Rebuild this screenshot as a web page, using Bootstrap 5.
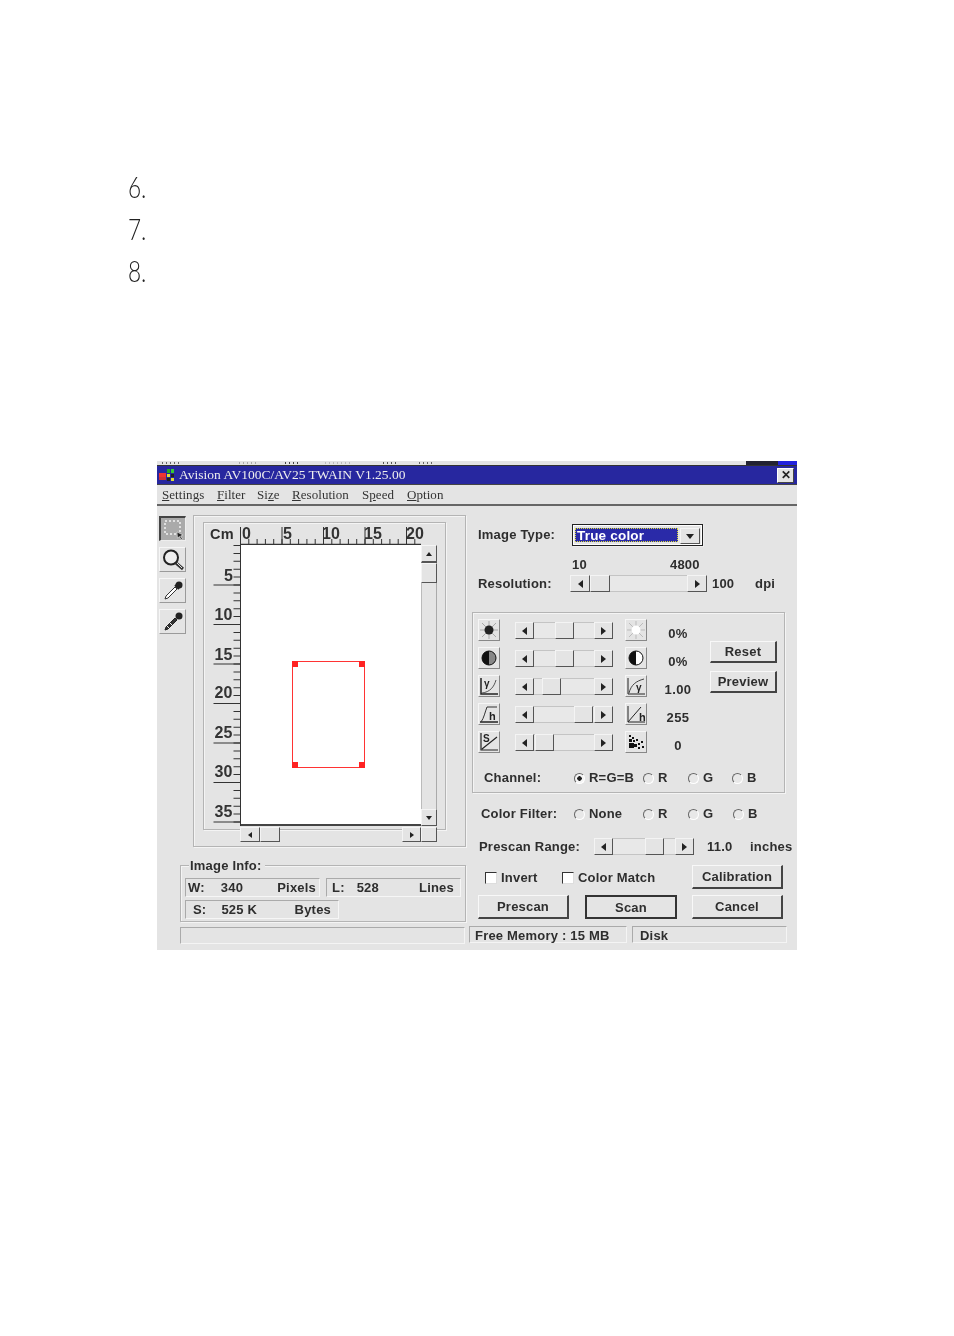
<!DOCTYPE html>
<html lang="en">
<head>
<meta charset="utf-8">
<title>Avision TWAIN</title>
<link href="https://cdn.jsdelivr.net/npm/bootstrap@5.3.0/dist/css/bootstrap.min.css" rel="stylesheet">
<style>
html,body{background:#fff;margin:0;padding:0}
body{width:954px;height:1336px;overflow:hidden;font-family:"Liberation Sans",Arial,sans-serif}
.stepsx{padding:166px 0 0 128px;height:461px}
.stepx{height:42px;line-height:42px;font-family:Lato,"Liberation Sans",sans-serif;font-weight:300;font-size:29px;color:#222;transform:scaleX(.78);transform-origin:0 50%}
.wnd{width:640px;height:489px;margin-left:157px;background:#e4e4e4;color:#2e2e2e;font-size:13px;font-weight:700;letter-spacing:.2px;line-height:14px;filter:blur(.35px);white-space:nowrap}
.slv{height:4px;overflow:hidden;position:relative}
.slvd{position:absolute;top:0;right:0;width:51px;height:4px;background:linear-gradient(90deg,#223 0 32px,#2222dd 32px)}
.ttl{height:20px;background:#27279f;color:#eee;font-family:"Liberation Serif",serif;font-weight:400;font-size:13.5px;letter-spacing:0;border-top:1px solid #333;border-bottom:1px solid #444}
.ttl svg{margin:0 3px 0 1px}
.xbtn{width:17px;height:15px;margin:0 3px 0 auto;background:#e4e4e4;border:1px solid;border-color:#fff #444 #444 #fff;color:#222;font:700 12px/12px "Liberation Sans",sans-serif;text-align:center;letter-spacing:0}
.mnu{height:21px;border-bottom:2px solid #666;font-family:"Liberation Serif",serif;font-weight:400;font-size:13px;letter-spacing:.05px;padding-left:5px;color:#333}
.mnu span{display:inline-block}
.mnu span:nth-child(1){width:55px}.mnu span:nth-child(2){width:40px}.mnu span:nth-child(3){width:35px}.mnu span:nth-child(4){width:70px}.mnu span:nth-child(5){width:45px}
.lcol{width:315px;flex:none}
.rcol{width:325px;flex:none}
.tools{width:28px;margin:10px 6px 0 2px;flex:none;gap:6px}
.tb{width:27px;height:25px;padding:0;display:flex;align-items:center;justify-content:center;background:#e4e4e4;border:1px solid;border-color:#f6f6f6 #9a9a9a #9a9a9a #f6f6f6;border-radius:0}
.tb.on{border-color:#444 #eee #eee #444;border-width:2px 1px 1px 2px;background:#aaa}
.etch{border:1px solid #b4b4b4;box-shadow:inset 1px 1px 0 #f4f4f4,1px 1px 0 #f4f4f4}
.outer{width:273px;height:332px;margin-top:9px;padding:6px 0 0 9px}
.inner{width:243px;height:308px;display:grid;grid-template-columns:36px 180px 16px;grid-template-rows:22px 281px;padding-left:1px;align-content:start}
.cmr{grid-column:1 / 4;display:flex}
.cmc{width:35px;padding:4px 0 0 5px;font-size:14.5px}
.rlr{display:block;overflow:visible}
.rlr text{font:700 16px "Liberation Sans",sans-serif;fill:#333;letter-spacing:.2px}
.cnv{background:#fff;position:relative;border-bottom:2px solid #444}
.rbox{position:absolute;left:51px;top:116px;width:73px;height:107px;border:1px solid #f33}
.rh{position:absolute;width:6px;height:6px;background:#f22}
.vsb{width:16px;height:281px}
.arw{width:0;height:0;border-style:solid;display:block}
.up{border-width:0 3px 4px 3px;border-color:transparent transparent #222}
.dn{border-width:4px 3px 0 3px;border-color:#222 transparent transparent}
.lf{border-width:4px 5px 4px 0;border-color:transparent #222 transparent transparent}
.rt{border-width:4px 0 4px 5px;border-color:transparent transparent transparent #222}
.hsb .lf{border-width:3px 4px 3px 0}.hsb .rt{border-width:3px 0 3px 4px}
.cmbb .dn{border-width:5px 4px 0 4px}
.sbb{background:#e4e4e4;border:1px solid;border-color:#f4f4f4 #555 #555 #f4f4f4;flex:none;display:flex;align-items:center;justify-content:center;border-radius:0;padding:0}
.vsb .b1{height:18px;border-bottom-width:2px}.vsb .t1{height:20px}.vsb .b2{height:17px}
.vtk{flex:1;background:#e4e4e4;border-right:1px solid #aaa;border-left:1px solid #bbb}
.hsb{grid-column:2 / 4;height:15px;margin:1px 0 0 -1px;width:197px}
.hsb .sbb{height:15px}
.sw20{width:20px}.sw19{width:19px}.sw16{width:16px}
.sbx{height:17px;width:100%}
.sbx .sbb{width:20px;height:17px}
.trk{flex:1;background:#e8e8e8;border-top:1px solid #c4c4c4;border-bottom:1px solid #c4c4c4;min-width:0;display:flex}
.trk .sbb{margin-top:-1px;margin-bottom:-1px;height:17px;width:20px}
.grp{width:286px;height:57px;margin:18px 0 0 23px;padding:12px 0 0 4px;position:relative}
.lgd{position:absolute;left:8px;top:-7px;background:#e4e4e4;padding:0 3px 0 1px;letter-spacing:.2px}
.cel{height:19px;border:1px solid;border-color:#aaa #f6f6f6 #f6f6f6 #aaa;display:flex;align-items:center;justify-content:space-between;letter-spacing:.2px;padding:0 3px 0 2px}
.cw1{width:135px}.cw2{width:135px;margin-left:6px;padding-left:5px;padding-right:6px}.cw3{width:154px;margin-top:3px;padding-left:7px;padding-right:7px}
.cel span:nth-child(2){margin-right:auto}
.cw1 span:nth-child(2){margin-left:16px}.cw2 span:nth-child(2){margin-left:12px}.cw3 span:nth-child(2){margin-left:15px}
.sbar{height:17px;margin:4px 0 0 23px}
.stc{height:17px;border:1px solid;border-color:#aaa #f4f4f4 #f4f4f4 #aaa;padding-left:5px;line-height:17px}
.s1{width:285px;margin-top:1px}.s2{width:158px;margin-left:4px;padding-left:5px}.s3{width:155px;margin-left:5px;padding-left:7px}
.r1{margin-top:18px;height:22px}
.lb1{width:100px;padding-left:6px}
.cmb{width:131px;height:22px;border:1px solid #222;box-shadow:inset 0 0 0 1px #fff,1px 1px 0 #eee;padding:3px 2px}
.cmbv{flex:1;background:#2a2aa8;color:#fff;line-height:15px;padding-left:2px;outline:1px dotted #dd3;outline-offset:-1px;font-size:13.5px}
.cmbb{width:20px;height:16px;margin-left:2px}
.r2{margin-top:12px;height:13px;padding-left:100px}.r2 span{width:98px}
.r3{margin-top:4px;height:17px}
.lb2{width:98px;padding-left:6px}
.sw1{width:137px;flex:none}
.v1{width:43px;margin-left:5px}
.pnl{width:313px;height:181px;margin-top:20px;padding:6px 0 0 5px}
.rws{width:232px;gap:6px}
.rwl{height:22px}
.ico{width:22px;height:22px;padding:0;flex:none;display:flex;align-items:center;justify-content:center;background:#e4e4e4;border:1px solid;border-color:#f6f6f6 #888 #888 #f6f6f6;border-radius:0}
.ssl{width:98px;margin:3px 12px 0 15px;flex:none;height:17px}
.ssl .sbb{width:19px}
.val{width:62px;text-align:center;padding-top:8px;letter-spacing:.4px}
.bts{margin-top:22px;gap:8px}
.wb{background:#e4e4e4;color:#2e2e2e;border:1px solid;border-color:#f8f8f8 #444 #444 #f8f8f8;border-bottom-width:2px;border-right-width:2px;border-radius:0;padding:0;font-size:13px;font-weight:700;letter-spacing:.2px;line-height:1;display:flex;align-items:center;justify-content:center}
.wb:hover{background:#e4e4e4;color:#2e2e2e;border-color:#f8f8f8 #444 #444 #f8f8f8}
.wb1{width:67px;height:22px}
.opt{height:14px}
.chn{margin-top:18px}
.o1{width:101px;padding-left:11px;margin-left:-5px}
.rdw{gap:4px;flex:none}
.w69{width:69px}.w45{width:45px}.w44{width:44px}
.wrd.form-check-input{width:11px;height:11px;margin:0;flex:none;border-radius:50%;border:1px solid;border-color:#666 #fff #fff #666;background:#e8e8e8;box-shadow:none}
.wrd.form-check-input:checked{background:radial-gradient(circle,#222 0 2px,#f4f4f4 2.5px)}
.wck.form-check-input{width:12px;height:12px;margin:0;flex:none;border-radius:0;border:1px solid;border-color:#333 #ddd #ddd #333;background:#fff;box-shadow:none}
.r4{height:14px;margin-top:14px}
.o2{width:102px;padding-left:9px}
.r5{height:17px;margin-top:17px}
.o3{width:122px;padding-left:7px}
.sw2{width:100px;flex:none}
.sw2 .sbb{width:19px}
.v2{margin-left:13px;width:43px}
.r6{height:24px;margin-top:10px}
.c1{width:90px;padding-left:13px;padding-top:2px}.c2{width:130px;padding-top:2px}
.wb2{width:91px;height:24px}
.r7{height:24px;margin-top:6px;padding-left:6px}
.wbd{border:2px solid #333;margin:0 15px 0 16px;width:92px}
.wbd:hover{border:2px solid #333}
svg{display:block}
</style>
</head>
<body>
<div class="stepsx">
  <div class="stepx">6.</div>
  <div class="stepx">7.</div>
  <div class="stepx">8.</div>
</div>
<div class="wnd">
  <div class="slv">
    <svg width="640" height="4" viewBox="0 0 640 4"><g fill="none" stroke-width="2" stroke-dasharray="1 3"><path d="M5 2h18" stroke="#666"/><path d="M82 2h18" stroke="#aaa"/><path d="M128 2h14" stroke="#444"/><path d="M168 2h26" stroke="#bbb"/><path d="M226 2h14" stroke="#555"/><path d="M262 2h14" stroke="#666"/></g></svg>
    <div class="slvd"></div>
  </div>
  <div class="ttl d-flex align-items-center">
    <svg width="18" height="15" viewBox="0 0 18 15"><rect width="18" height="15" fill="#27279f"/><rect x="1" y="5" width="7" height="4" fill="#e33"/><rect x="1" y="9" width="7" height="3" fill="#c33"/><rect x="9" y="1" width="3" height="4" fill="#2a2"/><rect x="13" y="1" width="3" height="4" fill="#3c3"/><rect x="9" y="6" width="3" height="3" fill="#dd3"/><rect x="13" y="6" width="3" height="3" fill="#222"/><rect x="9" y="10" width="3" height="3" fill="#222"/><rect x="13" y="10" width="3" height="3" fill="#dd3"/></svg>
    <span>Avision AV100C/AV25 TWAIN V1.25.00</span>
    <div class="xbtn">✕</div>
  </div>
  <div class="mnu d-flex align-items-center">
    <span><u>S</u>ettings</span><span><u>F</u>ilter</span><span>Si<u>z</u>e</span><span><u>R</u>esolution</span><span>S<u>p</u>eed</span><span><u>O</u>ption</span>
  </div>
  <div class="d-flex">
    <div class="lcol">
      <div class="d-flex">
        <div class="tools d-flex flex-column">
          <button class="tb on" type="button" aria-label="Select"><svg width="23" height="21" viewBox="0 0 23 21"><rect x="3" y="2" width="15" height="13" fill="none" stroke="#f2f2f2" stroke-width="1.500" stroke-dasharray="2 2"/><path d="M15 13l6 3-2.500 1 2 3-1.500.5-1.500-3-2 1.500z" fill="#222" stroke="#fff" stroke-width=".5"/></svg></button>
          <button class="tb" type="button" aria-label="Zoom"><svg width="24" height="23" viewBox="0 0 24 23"><circle cx="10" cy="9.500" r="7" fill="#eee" stroke="#222" stroke-width="2"/><path d="M15 15l7 6" stroke="#333" stroke-width="3"/><path d="M16 15l5 5" stroke="#ddd" stroke-width="1"/></svg></button>
          <button class="tb" type="button" aria-label="Pick"><svg width="22" height="22" viewBox="0 0 22 22"><path d="M13 5l4 4" stroke="#222" stroke-width="2"/><circle cx="17" cy="5" r="3.500" fill="#222"/><path d="M13 7L4 16l-1 3 3-1 9-9z" fill="#fff" stroke="#333"/></svg></button>
          <button class="tb" type="button" aria-label="Pick dark"><svg width="22" height="22" viewBox="0 0 22 22"><circle cx="17" cy="5" r="3.500" fill="#222"/><path d="M13 7L4 16l-1 3 3-1 9-9z" fill="#333" stroke="#222"/><path d="M4 14l4 4M7 11l4 4" stroke="#eee"/></svg></button>
        </div>
        <div class="outer etch">
          <div class="inner etch">
            <div class="cmr">
              <div class="cmc">Cm</div>
              <svg class="rlr" width="181" height="22" viewBox="0 0 181 22">
                <g stroke="#333">
                  <line x1="0" y1="21.500" x2="181" y2="21.500" stroke-width="1.500"/>
                  <line x1="0" y1="18.500" x2="181" y2="18.500" stroke-width="5" stroke-dasharray="1 7.300"/>
                  <line x1="0" y1="12.500" x2="181" y2="12.500" stroke-width="17" stroke-dasharray="1 40.500"/>
                </g>
                <text x="2" y="16">0</text><text x="43" y="16">5</text><text x="82" y="16">10</text><text x="124" y="16">15</text><text x="166" y="16">20</text>
              </svg>
            </div>
            <svg class="rlr" width="36" height="281" viewBox="0 0 36 281">
              <g stroke="#333">
                <line x1="35.500" y1="0" x2="35.500" y2="281" stroke-width="1"/>
                <line x1="32" y1="0" x2="32" y2="281" stroke-width="7" stroke-dasharray="1 6.900"/>
                <line x1="22" y1="39.500" x2="22" y2="281" stroke-width="27" stroke-dasharray="1 38.500"/>
              </g>
              <text x="19" y="36">5</text><text x="9.500" y="75">10</text><text x="9.500" y="115">15</text><text x="9.500" y="153">20</text><text x="9.500" y="193">25</text><text x="9.500" y="232">30</text><text x="9.500" y="272">35</text>
            </svg>
            <div class="cnv">
              <div class="rbox">
                <span class="rh" style="left:-1px;top:-1px"></span><span class="rh" style="right:-1px;top:-1px"></span><span class="rh" style="left:-1px;bottom:-1px"></span><span class="rh" style="right:-1px;bottom:-1px"></span>
              </div>
            </div>
            <div class="vsb d-flex flex-column">
              <div class="sbb b1"><i class="arw up"></i></div>
              <div class="sbb t1"></div>
              <div class="vtk"></div>
              <div class="sbb b2"><i class="arw dn"></i></div>
            </div>
            <div class="hsb d-flex">
              <div class="sbb sw20"><i class="arw lf"></i></div>
              <div class="sbb sw20"></div>
              <div class="flex-grow-1"></div>
              <div class="sbb sw19"><i class="arw rt"></i></div>
              <div class="sbb sw16"></div>
            </div>
          </div>
        </div>
      </div>
      <div class="grp etch">
        <div class="lgd">Image Info:</div>
        <div class="d-flex">
          <div class="cel cw1"><span>W:</span><span>340</span><span>Pixels</span></div>
          <div class="cel cw2"><span>L:</span><span>528</span><span>Lines</span></div>
        </div>
        <div class="cel cw3"><span>S:</span><span>525 K</span><span>Bytes</span></div>
      </div>
    </div>
    <div class="rcol">
      <div class="r1 d-flex align-items-center">
        <div class="lb1">Image Type:</div>
        <div class="cmb d-flex"><div class="cmbv">True color</div><div class="sbb cmbb"><i class="arw dn"></i></div></div>
      </div>
      <div class="r2 d-flex align-items-center"><span>10</span><span>4800</span></div>
      <div class="r3 d-flex align-items-center">
        <div class="lb2">Resolution:</div>
        <div class="sw1"><div class="sbx d-flex"><div class="sbb"><i class="arw lf"></i></div><div class="trk"><div class="sbb"></div></div><div class="sbb"><i class="arw rt"></i></div></div></div>
        <div class="v1">100</div><div>dpi</div>
      </div>
      <div class="pnl etch">
        <div class="d-flex">
          <div class="rws d-flex flex-column">
            <div class="rwl d-flex">
              <div class="ico"><svg width="20" height="20" viewBox="0 0 20 20"><g stroke="#a8a8a8"><path d="M10 1v18M1 10h18M3 3l14 14M17 3L3 17"/></g><circle cx="10" cy="10" r="4.500" fill="#222"/></svg></div>
              <div class="ssl"><div class="sbx d-flex"><div class="sbb"><i class="arw lf"></i></div><div class="trk"><div class="sbb" style="margin-left:21px"></div></div><div class="sbb"><i class="arw rt"></i></div></div></div>
              <div class="ico"><svg width="20" height="20" viewBox="0 0 20 20"><g stroke="#bbb"><path d="M10 1v18M1 10h18M3 3l14 14M17 3L3 17"/></g><circle cx="10" cy="10" r="4.500" fill="#fff"/></svg></div>
              <div class="val">0%</div>
            </div>
            <div class="rwl d-flex">
              <div class="ico"><svg width="18" height="18" viewBox="0 0 18 18"><circle cx="9" cy="9" r="7" fill="#888" stroke="#111"/><path d="M9 2a7 7 0 0 0 0 14z" fill="#111"/></svg></div>
              <div class="ssl"><div class="sbx d-flex"><div class="sbb"><i class="arw lf"></i></div><div class="trk"><div class="sbb" style="margin-left:21px"></div></div><div class="sbb"><i class="arw rt"></i></div></div></div>
              <div class="ico"><svg width="18" height="18" viewBox="0 0 18 18"><circle cx="9" cy="9" r="7" fill="#fff" stroke="#111"/><path d="M9 2a7 7 0 0 0 0 14z" fill="#111"/></svg></div>
              <div class="val">0%</div>
            </div>
            <div class="rwl d-flex">
              <div class="ico"><svg width="20" height="20" viewBox="0 0 20 20"><path d="M2 2v16h17" fill="none" stroke="#222" stroke-width="1.500"/><path d="M3 17c8-1 12-6 14-13" fill="none" stroke="#555"/><text x="5" y="11" font-size="10" fill="#222">γ</text></svg></div>
              <div class="ssl"><div class="sbx d-flex"><div class="sbb"><i class="arw lf"></i></div><div class="trk"><div class="sbb" style="margin-left:8px"></div></div><div class="sbb"><i class="arw rt"></i></div></div></div>
              <div class="ico"><svg width="20" height="20" viewBox="0 0 20 20"><path d="M2 2v16h17" fill="none" stroke="#222"/><path d="M3 17C5 9 10 5 18 3" fill="none" stroke="#444"/><text x="10" y="15" font-size="10" fill="#222">γ</text></svg></div>
              <div class="val">1.00</div>
            </div>
            <div class="rwl d-flex">
              <div class="ico"><svg width="20" height="20" viewBox="0 0 20 20"><path d="M1 18h18" stroke="#222" stroke-width="1.500"/><path d="M2 18C5 14 6 8 8 3h10" fill="none" stroke="#333"/><text x="10" y="16" font-size="11" font-weight="700" fill="#222">h</text></svg></div>
              <div class="ssl"><div class="sbx d-flex"><div class="sbb"><i class="arw lf"></i></div><div class="trk"><div class="sbb" style="margin-left:40px"></div></div><div class="sbb"><i class="arw rt"></i></div></div></div>
              <div class="ico"><svg width="20" height="20" viewBox="0 0 20 20"><path d="M2 2v16h17M2 18L15 3" fill="none" stroke="#222"/><text x="13" y="17" font-size="11" font-weight="700" fill="#222">h</text></svg></div>
              <div class="val">255</div>
            </div>
            <div class="rwl d-flex">
              <div class="ico"><svg width="20" height="20" viewBox="0 0 20 20"><path d="M2 1v17h17M3 17L18 5" fill="none" stroke="#222" stroke-width="1.200"/><text x="4" y="10" font-size="10" fill="#222">S</text></svg></div>
              <div class="ssl"><div class="sbx d-flex"><div class="sbb"><i class="arw lf"></i></div><div class="trk"><div class="sbb" style="margin-left:1px"></div></div><div class="sbb"><i class="arw rt"></i></div></div></div>
              <div class="ico"><svg width="20" height="20" viewBox="0 0 20 20"><g fill="#111"><path d="M3 3h2v2H3zM6 5h2v2H6zM3 7h3v3H3zM7 8h2v2H7zM10 7h2v2h-2zM3 11h5v5H3zM8 12h3v3H8zM12 11h2v2h-2zM15 9h2v2h-2zM12 15h2v2h-2zM16 14h2v2h-2z"/></g></svg></div>
              <div class="val">0</div>
            </div>
          </div>
          <div class="bts d-flex flex-column">
            <button class="btn wb wb1" type="button">Reset</button>
            <button class="btn wb wb1" type="button">Preview</button>
          </div>
        </div>
        <div class="opt chn d-flex align-items-center">
          <div class="o1">Channel:</div>
          <label class="rdw d-flex align-items-center w69"><input class="form-check-input wrd" type="radio" name="ch" checked>R=G=B</label>
          <label class="rdw d-flex align-items-center w45"><input class="form-check-input wrd" type="radio" name="ch">R</label>
          <label class="rdw d-flex align-items-center w44"><input class="form-check-input wrd" type="radio" name="ch">G</label>
          <label class="rdw d-flex align-items-center"><input class="form-check-input wrd" type="radio" name="ch">B</label>
        </div>
      </div>
      <div class="opt r4 d-flex align-items-center">
        <div class="o2">Color Filter:</div>
        <label class="rdw d-flex align-items-center w69"><input class="form-check-input wrd" type="radio" name="cf">None</label>
        <label class="rdw d-flex align-items-center w45"><input class="form-check-input wrd" type="radio" name="cf">R</label>
        <label class="rdw d-flex align-items-center w45"><input class="form-check-input wrd" type="radio" name="cf">G</label>
        <label class="rdw d-flex align-items-center"><input class="form-check-input wrd" type="radio" name="cf">B</label>
      </div>
      <div class="r5 d-flex align-items-center">
        <div class="o3">Prescan Range:</div>
        <div class="sw2"><div class="sbx d-flex"><div class="sbb"><i class="arw lf"></i></div><div class="trk"><div class="sbb" style="margin-left:32px"></div></div><div class="sbb"><i class="arw rt"></i></div></div></div>
        <div class="v2">11.0</div><div>inches</div>
      </div>
      <div class="r6 d-flex align-items-center">
        <label class="c1 rdw d-flex align-items-center"><input class="form-check-input wck" type="checkbox">Invert</label>
        <label class="c2 rdw d-flex align-items-center"><input class="form-check-input wck" type="checkbox">Color Match</label>
        <button class="btn wb wb2" type="button">Calibration</button>
      </div>
      <div class="r7 d-flex">
        <button class="btn wb wb2" type="button">Prescan</button>
        <button class="btn wb wb2 wbd" type="button">Scan</button>
        <button class="btn wb wb2" type="button">Cancel</button>
      </div>
    </div>
  </div>
  <div class="sbar d-flex">
    <div class="stc s1"></div>
    <div class="stc s2">Free Memory : 15 MB</div>
    <div class="stc s3">Disk</div>
  </div>
</div>
<script src="https://cdn.jsdelivr.net/npm/bootstrap@5.3.0/dist/js/bootstrap.bundle.min.js"></script>
</body>
</html>
